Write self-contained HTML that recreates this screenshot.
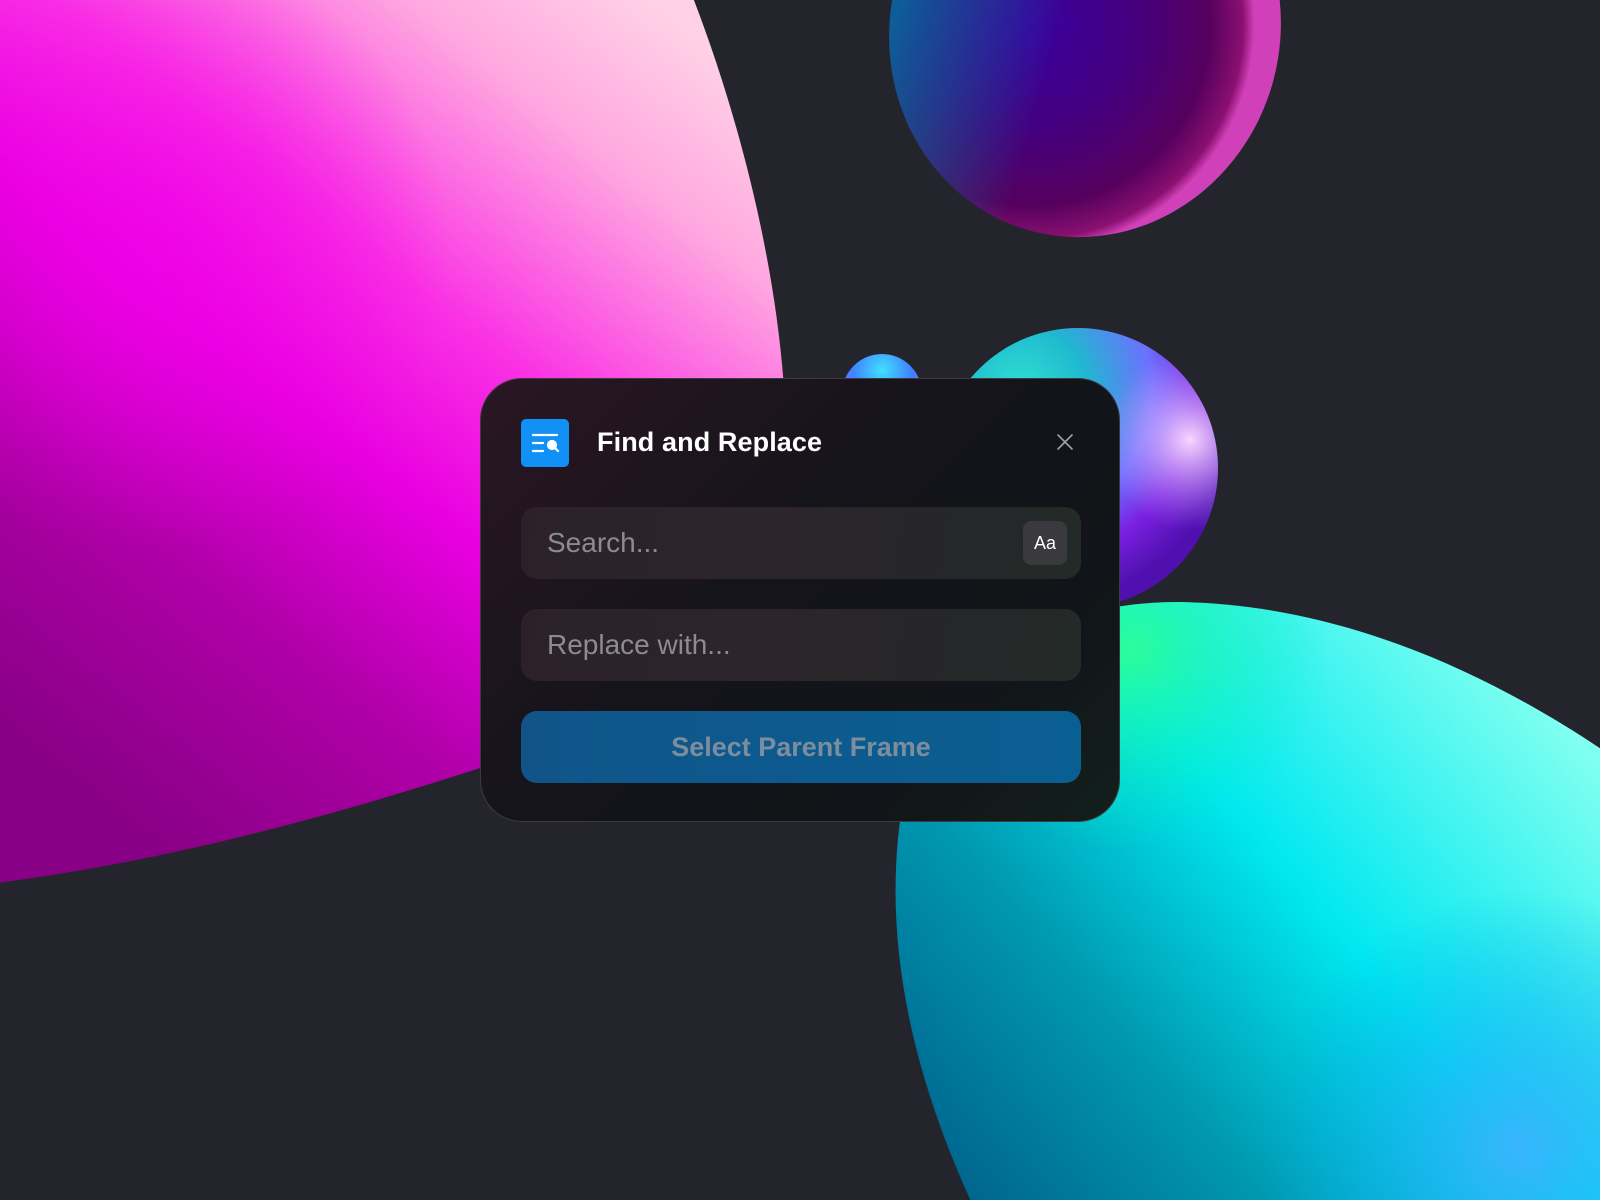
<!DOCTYPE html>
<html><head><meta charset="utf-8"><style>
html,body{margin:0;padding:0;width:1600px;height:1200px;overflow:hidden;background:#24252c;font-family:"Liberation Sans",sans-serif}
#wrap{position:relative;width:1600px;height:1200px;overflow:hidden;background:#24252c}
svg.bg{position:absolute;left:0;top:0}
#dlg{position:absolute;left:480px;top:378px;width:638px;height:442px;border-radius:42px;border:1px solid #3a3a40;
background:linear-gradient(135deg,#2a1624 0%,#14141a 45%,#111418 75%,#12201c 100%)}
.ic{position:absolute;left:40px;top:40px;width:48px;height:48px;border-radius:5px;background:#1190f5}
.title{position:absolute;left:116px;top:48px;font-size:27px;font-weight:700;color:#fff;letter-spacing:.1px}
.x{position:absolute;left:575px;top:54px}
.f{position:absolute;left:40px;width:560px;height:72px;border-radius:16px;
background:linear-gradient(100deg,#2c2128 0%,#2d252c 40%,#262628 70%,#232a27 100%)}
.f span{position:absolute;left:26px;top:20px;font-size:28px;color:#8b8b90}
.aa{position:absolute;left:502px;top:14px;width:44px;height:44px;border-radius:8px;background:#3a393e;color:#fff;font-size:18px;line-height:44px;text-align:center}
.btn{position:absolute;left:40px;top:332px;width:560px;height:72px;border-radius:16px;background:linear-gradient(90deg,#10548a,#0a5f92);
color:#7c8e9e;font-size:27px;font-weight:700;text-align:center;line-height:72px}
</style></head><body><div id="wrap">
<svg class="bg" width="1600" height="1200" viewBox="0 0 1600 1200">
<defs>
<linearGradient id="pk" x1="720" y1="60" x2="120" y2="820" gradientUnits="userSpaceOnUse">
<stop offset="0" stop-color="#ffd0e6"/><stop offset=".15" stop-color="#ffa8e0"/><stop offset=".38" stop-color="#fa30e4"/><stop offset=".55" stop-color="#e800e0"/><stop offset=".75" stop-color="#b000a8"/><stop offset="1" stop-color="#880085"/></linearGradient>
<radialGradient id="pk2" cx="150" cy="250" r="300" gradientUnits="userSpaceOnUse"><stop offset="0" stop-color="#f000e8" stop-opacity=".7"/><stop offset="1" stop-color="#f000e8" stop-opacity="0"/></radialGradient>
<radialGradient id="tp" cx="1030" cy="40" r="225" gradientUnits="userSpaceOnUse"><stop offset="0" stop-color="#3a00a0"/><stop offset=".45" stop-color="#440080"/><stop offset=".8" stop-color="#55005e"/><stop offset=".95" stop-color="#8a1070"/><stop offset="1" stop-color="#d040b8"/></radialGradient>
<linearGradient id="tp2" x1="893" y1="0" x2="1060" y2="0" gradientUnits="userSpaceOnUse"><stop offset="0" stop-color="#0070a0" stop-opacity=".85"/><stop offset="1" stop-color="#0070a0" stop-opacity="0"/></linearGradient>
<radialGradient id="bl" cx="1020" cy="390" r="220" gradientUnits="userSpaceOnUse"><stop offset="0" stop-color="#2ee0d0"/><stop offset=".3" stop-color="#20b8d0"/><stop offset=".6" stop-color="#6c70ff"/><stop offset=".8" stop-color="#7a20e0"/><stop offset="1" stop-color="#5010b0"/></radialGradient>
<radialGradient id="bl2" cx="1190" cy="440" r="90" gradientUnits="userSpaceOnUse"><stop offset="0" stop-color="#ffe0ff" stop-opacity=".95"/><stop offset="1" stop-color="#c090ff" stop-opacity="0"/></radialGradient>
<radialGradient id="tn" cx="882" cy="370" r="50" gradientUnits="userSpaceOnUse"><stop offset="0" stop-color="#40e0ff"/><stop offset=".6" stop-color="#4080ff"/><stop offset="1" stop-color="#9a60ff"/></radialGradient>
<linearGradient id="cy" x1="920" y1="1150" x2="1500" y2="650" gradientUnits="userSpaceOnUse"><stop offset="0" stop-color="#00648e"/><stop offset=".3" stop-color="#0098b0"/><stop offset=".6" stop-color="#00e8f0"/><stop offset="1" stop-color="#80fff0"/></linearGradient>
<radialGradient id="cy2" cx="1130" cy="650" r="200" gradientUnits="userSpaceOnUse"><stop offset="0" stop-color="#30ff90" stop-opacity=".9"/><stop offset="1" stop-color="#00f0c0" stop-opacity="0"/></radialGradient>
<radialGradient id="cy3" cx="1520" cy="1150" r="260" gradientUnits="userSpaceOnUse"><stop offset="0" stop-color="#40b0ff" stop-opacity=".9"/><stop offset="1" stop-color="#00a0f0" stop-opacity="0"/></radialGradient>
</defs>
<path d="M-20 -10 L690 -10 C745 130 785 300 786 440 C786 600 640 720 480 768 C320 820 150 865 -20 885 Z" fill="url(#pk)"/>
<path d="M-20 -10 L690 -10 C745 130 785 300 786 440 C786 600 640 720 480 768 C320 820 150 865 -20 885 Z" fill="url(#pk2)"/>
<g transform="rotate(15 1085 30)"><ellipse cx="1085" cy="30" rx="195" ry="208" fill="url(#tp)"/><ellipse cx="1085" cy="30" rx="195" ry="208" fill="url(#tp2)"/></g>
<circle cx="882" cy="394" r="40" fill="url(#tn)"/>
<circle cx="1078" cy="468" r="140" fill="url(#bl)"/><circle cx="1078" cy="468" r="140" fill="url(#bl2)"/>
<path d="M975 1210 C905 1060 880 920 905 790 C940 660 1050 602 1180 602 C1350 605 1500 680 1610 755 L1610 1210 Z" fill="url(#cy)"/>
<path d="M975 1210 C905 1060 880 920 905 790 C940 660 1050 602 1180 602 C1350 605 1500 680 1610 755 L1610 1210 Z" fill="url(#cy2)"/>
<path d="M975 1210 C905 1060 880 920 905 790 C940 660 1050 602 1180 602 C1350 605 1500 680 1610 755 L1610 1210 Z" fill="url(#cy3)"/>
</svg>
<div id="dlg">
 <div class="ic"><svg width="48" height="48" viewBox="0 0 48 48" fill="none" stroke="#fff" stroke-width="2.2" stroke-linecap="round">
  <path d="M12 16h24M12 24h10M12 32h10"/><circle cx="31" cy="26" r="4" fill="#fff"/><path d="M34 29l3 3"/></svg></div>
 <div class="title">Find and Replace</div>
 <svg class="x" width="18" height="18" viewBox="0 0 18 18" stroke="#a0a0a6" stroke-width="1.6" stroke-linecap="round"><path d="M2 2l14 14M16 2L2 16"/></svg>
 <div class="f" style="top:128px"><span>Search...</span><div class="aa">Aa</div></div>
 <div class="f" style="top:230px"><span>Replace with...</span></div>
 <div class="btn">Select Parent Frame</div>
</div>
</div></body></html>
